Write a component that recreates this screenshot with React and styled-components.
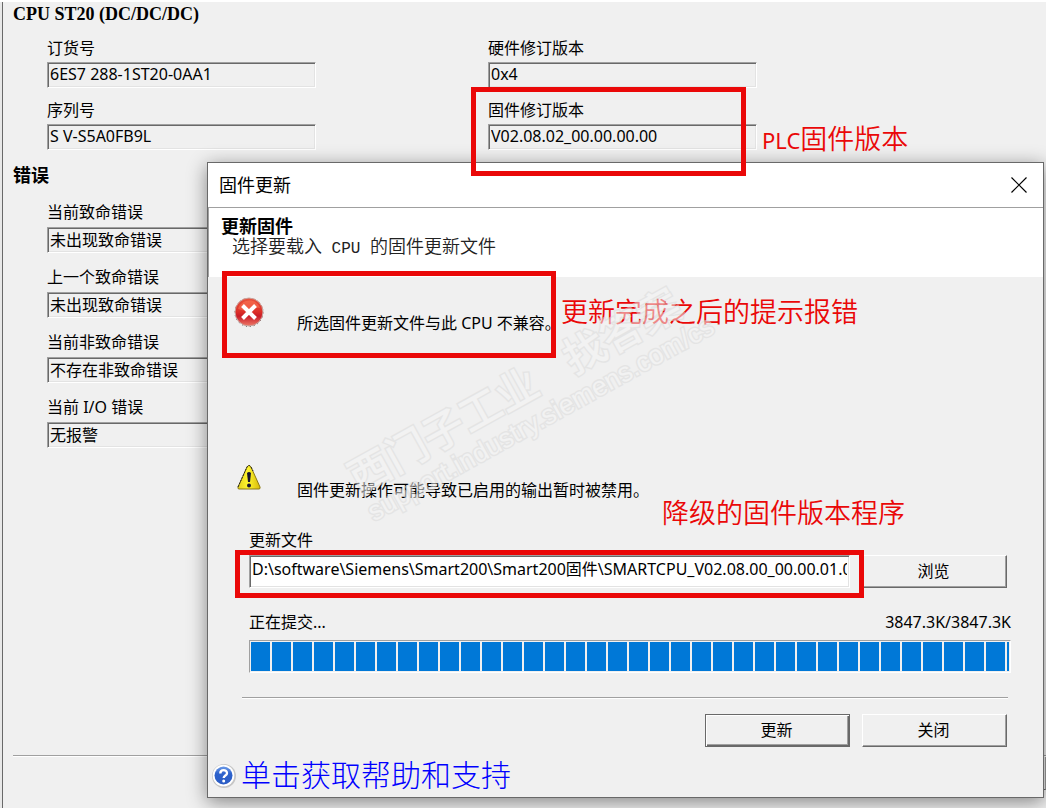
import React from "react";
import styled, { createGlobalStyle, css } from "styled-components";

const GlobalStyle = createGlobalStyle`
  * { box-sizing: border-box; }
  body {
    margin: 0;
    background: #fff;
    color: #000;
    font: 16px/20px "Noto Sans", "Noto Sans CJK SC", sans-serif;
  }
  h1, h2, h3, p { margin: 0; }
  button, input { font: inherit; color: inherit; }
`;

const serif = `"Liberation Serif", "Noto Sans CJK SC", serif`;

const sunken = css`
  border: 1px solid;
  border-color: #a0a0a0 #fff #fff #a0a0a0;
  box-shadow: inset 1px 1px 0 #696969, inset -1px -1px 0 #e3e3e3;
`;

const Screen = styled.div`
  position: relative;
  min-height: 100vh;
  padding: 2px 0 0 2px;
  background: linear-gradient(#fff 2px, #e8e8e8 2px);
  overflow: hidden;
`;

const Page = styled.main`
  display: flex;
  flex-direction: column;
  min-height: calc(100vh - 2px);
  padding-left: 10px;
  border-left: 1px solid #696969;
  background: #f0f0f0;
`;

const DeviceTitle = styled.h1`
  font: bold 18px/24px ${serif};
`;

const SectionTitle = styled.h2`
  margin-top: 14px;
  font: bold 18px/24px ${serif};
`;

const FieldGrid = styled.div`
  display: grid;
  grid-template-columns: repeat(auto-fill, 441px);
  gap: 12px 0;
  margin-top: 12px;
  padding-left: 34px;
`;

const ErrorList = styled.div`
  display: grid;
  gap: 14px;
  margin-top: 14px;
  padding-left: 34px;
`;

const FieldBox = styled.div`
  display: flex;
  flex-direction: column;
  align-items: flex-start;
  gap: ${(p) => p.$gap}px;
`;

const ReadOnlyInput = styled.input`
  ${sunken}
  width: 269px;
  height: 26px;
  padding: 0 3px 2px 2px;
  background: #f0f0f0;
  outline: none;
`;

const Rule = styled.hr`
  height: 2px;
  margin: 0;
  border: 0;
  border-top: 1px solid #a0a0a0;
  background: #fff;
`;

const PageFooter = styled.footer`
  height: 53px;
  margin-top: auto;
`;

const FooterSlot = styled.div`
  width: 200px;
  height: 33px;
  margin-left: auto;
  border-right: 1px solid #a0a0a0;
  border-bottom: 1px solid #696969;
`;

const Dialog = styled.section`
  position: absolute;
  top: 162px;
  left: 207px;
  right: 2px;
  border: 1px solid #696969;
  background: #f0f0f0;
  box-shadow: 0 4px 18px rgba(0, 0, 0, 0.45);
`;

const TitleBar = styled.header`
  display: flex;
  align-items: center;
  justify-content: space-between;
  height: 44px;
  padding: 0 16px 0 11px;
  background: #fff;
`;

const DialogTitle = styled.h2`
  font-size: 18px;
  font-weight: 400;
  line-height: 24px;
`;

const CloseButton = styled.button`
  display: flex;
  padding: 0;
  border: 0;
  background: none;
`;

const Banner = styled.div`
  height: 70px;
  padding: 9px 0 0 12px;
  border-top: 1px solid #a0a0a0;
  border-left: 1px solid #a0a0a0;
  background: #fff;
  font: 18px/20px ${serif};
`;

const BannerTitle = styled.h3`
  font-size: 18px;
  line-height: 20px;
`;

const BannerText = styled.p`
  padding-left: 11px;
  color: #222;
  font-weight: 350;
  white-space: pre;
`;

const MonoText = styled.span`
  font-family: "Liberation Mono", monospace;
  font-size: 16px;
`;

const Messages = styled.div`
  display: grid;
  gap: 131px;
  padding: 20px 0 0 26px;
`;

const Message = styled.div`
  display: grid;
  grid-template-columns: 63px 1fr;
  height: 36px;
`;

const IconBox = styled.span`
  display: flex;
  justify-content: center;
  width: 30px;
`;

const MessageText = styled.p`
  margin-top: 16px;
`;

const FileForm = styled.div`
  padding: 30px 36px 0 41px;
`;

const FileRow = styled.div`
  display: flex;
  gap: 12px;
  margin-top: 5px;
`;

const PathInput = styled.input`
  ${sunken}
  flex: 1;
  min-width: 0;
  height: 33px;
  padding: 0 2px 8px;
  background: #fff;
  outline: none;
`;

const PushButton = styled.button`
  flex: none;
  width: 145px;
  height: 33px;
  padding: 0 2px 2px 0;
  border: 1px solid;
  border-color: ${(p) => (p.$primary ? "#696969" : "#fff #696969 #696969 #fff")};
  background: #f0f0f0;
  box-shadow: ${(p) =>
    p.$primary
      ? "inset 1px 1px 0 #fff, inset -1px -1px 0 #696969, inset -2px -2px 0 #a0a0a0"
      : "inset -1px -1px 0 #a0a0a0"};
`;

const ProgressArea = styled.div`
  padding: 24px 32px 0 41px;
`;

const StatusRow = styled.div`
  display: flex;
  justify-content: space-between;
`;

const ProgressTrack = styled.div`
  height: 33px;
  margin-top: 8px;
  padding: 1px;
  border: 1px solid;
  border-color: #a0a0a0 #fff #fff #a0a0a0;
`;

const ProgressFill = styled.div`
  height: 100%;
  background: repeating-linear-gradient(90deg, #0078d7 0 19px, #f0f0f0 19px 21px);
`;

const Actions = styled.div`
  margin: 24px 35px 0 34px;
`;

const ButtonRow = styled.div`
  display: flex;
  justify-content: flex-end;
  gap: 12px;
  padding: 15px 1px 0 0;
`;

const HelpLink = styled.a`
  display: flex;
  align-items: center;
  gap: 5px;
  height: 42px;
  margin: 8px 0 0 4px;
  color: #0000ff;
  font: 300 30px/36px ${serif};
  text-decoration: none;
`;

const Frame = styled.div`
  position: absolute;
  top: ${(p) => p.$y}px;
  left: ${(p) => p.$x}px;
  width: ${(p) => p.$w}px;
  height: ${(p) => p.$h}px;
  border: 5px solid #ea0808;
  pointer-events: none;
`;

const Note = styled.p`
  position: absolute;
  top: ${(p) => p.$y}px;
  left: ${(p) => p.$x}px;
  color: #ea0808;
  font-family: "Noto Sans CJK SC", sans-serif;
  font-size: 27px;
  font-weight: 350;
  line-height: 36px;
  white-space: nowrap;
`;

const NoteLatin = styled.span`
  font-family: "Noto Sans", sans-serif;
  font-size: 22px;
  font-weight: 400;
`;

const Watermark = styled.div`
  position: absolute;
  top: 462px;
  left: 341px;
  transform: rotate(-29deg);
  transform-origin: 0 0;
  color: #f4f4f4;
  -webkit-text-stroke: 3px #dcdcdc;
  paint-order: stroke fill;
  opacity: 0.55;
  white-space: nowrap;
  pointer-events: none;
`;

const WatermarkName = styled.div`
  display: flex;
  gap: 36px;
  font-size: 42px;
  font-weight: 500;
  line-height: 42px;
`;

const WatermarkUrl = styled.div`
  font: 27px/34px "Liberation Sans", sans-serif;
`;

function Field({ id, label, value, gap }) {
  return (
    <FieldBox $gap={gap}>
      <label htmlFor={id}>{label}</label>
      <ReadOnlyInput id={id} value={value} readOnly />
    </FieldBox>
  );
}

function ErrorIcon() {
  return (
    <svg width="30" height="30" viewBox="0 0 30 30" aria-hidden="true">
      <defs>
        <linearGradient id="errorFill" x1="0" y1="0" x2="0" y2="1">
          <stop offset="0" stopColor="#e8553f" />
          <stop offset="0.5" stopColor="#dc2f28" />
          <stop offset="0.65" stopColor="#c91c28" />
          <stop offset="1" stopColor="#ee7a68" />
        </linearGradient>
      </defs>
      <circle cx="15" cy="15.5" r="14" fill="none" stroke="#333" strokeDasharray="1 3" />
      <circle cx="15" cy="15" r="14" fill="url(#errorFill)" stroke="#c9a5a0" />
      <path d="M4 12C7 2 22 0 26 11 20 9 14 16 4 12Z" fill="#ff7b58" opacity="0.5" />
      <path d="M8.500 8.500 21.500 21.500M21.500 8.500 8.500 21.500" stroke="#fff" strokeWidth="4" />
    </svg>
  );
}

function WarningIcon() {
  return (
    <svg width="24" height="26" viewBox="0 0 24 26" aria-hidden="true">
      <defs>
        <linearGradient id="warnFill" x1="0" y1="0" x2="1" y2="0">
          <stop offset="0" stopColor="#e3d21c" />
          <stop offset="0.45" stopColor="#fff62e" />
          <stop offset="1" stopColor="#d8b90a" />
        </linearGradient>
      </defs>
      <path d="M12 1.5Q13 1.5 14 3L23 23Q23.500 25 22 25H2Q.5 25 1 23L10 3Q11 1.500 12 1.500Z" fill="url(#warnFill)" stroke="#8b7a14" />
      <path d="M1 23 10 3Q12 0 14 3L16 7" fill="none" stroke="#222" strokeDasharray="2 1" />
      <path d="M10 9Q12 7 14 9L13 18H11Z" fill="#17142e" />
      <circle cx="12" cy="21.500" r="2" fill="#17142e" />
    </svg>
  );
}

function HelpIcon() {
  return (
    <svg width="24" height="24" viewBox="0 0 24 24" aria-hidden="true">
      <defs>
        <linearGradient id="helpFill" x1="0" y1="0" x2="0" y2="1">
          <stop offset="0" stopColor="#6d9be8" />
          <stop offset="0.4" stopColor="#2d62cc" />
          <stop offset="1" stopColor="#2b5cc4" />
        </linearGradient>
      </defs>
      <circle cx="12" cy="12" r="12" fill="#c6c6c6" />
      <circle cx="11.500" cy="11.500" r="10.800" fill="#fff" />
      <circle cx="11.500" cy="11.500" r="9" fill="url(#helpFill)" />
      <path d="M8.300 9.500C8.300 5 15 5.200 15 9.200 15 11.600 11.700 11.500 11.700 14" fill="none" stroke="#fff" strokeWidth="2.400" />
      <circle cx="11.700" cy="17" r="1.500" fill="#fff" />
    </svg>
  );
}

const identity = [
  { id: "order", label: "订货号", value: "6ES7 288-1ST20-0AA1" },
  { id: "hardware", label: "硬件修订版本", value: "0x4" },
  { id: "serial", label: "序列号", value: "S V-S5A0FB9L" },
  { id: "firmware", label: "固件修订版本", value: "V02.08.02_00.00.00.00" },
];

const errors = [
  { id: "fatal", label: "当前致命错误", value: "未出现致命错误" },
  { id: "lastFatal", label: "上一个致命错误", value: "未出现致命错误" },
  { id: "nonFatal", label: "当前非致命错误", value: "不存在非致命错误" },
  { id: "io", label: "当前 I/O 错误", value: "无报警" },
];

export default function App() {
  return (
    <Screen>
      <GlobalStyle />
      <Page>
        <DeviceTitle>CPU ST20 (DC/DC/DC)</DeviceTitle>
        <FieldGrid>
          {identity.map((f) => (
            <Field key={f.id} {...f} gap={4} />
          ))}
        </FieldGrid>
        <SectionTitle>错误</SectionTitle>
        <ErrorList>
          {errors.map((f) => (
            <Field key={f.id} {...f} gap={5} />
          ))}
        </ErrorList>
        <PageFooter>
          <Rule />
          <FooterSlot />
        </PageFooter>
      </Page>

      <Dialog role="dialog" aria-labelledby="dialogTitle">
        <TitleBar>
          <DialogTitle id="dialogTitle">固件更新</DialogTitle>
          <CloseButton type="button" aria-label="关闭窗口">
            <svg width="16" height="16" viewBox="0 0 16 16">
              <path d="M.5.5 15.500 15.500M15.500.5.5 15.500" stroke="#000" strokeWidth="1.200" />
            </svg>
          </CloseButton>
        </TitleBar>
        <Banner>
          <BannerTitle>更新固件</BannerTitle>
          <BannerText>
            选择要载入<MonoText> CPU </MonoText>的固件更新文件
          </BannerText>
        </Banner>
        <Messages>
          <Message>
            <IconBox>
              <ErrorIcon />
            </IconBox>
            <MessageText>所选固件更新文件与此 CPU 不兼容。</MessageText>
          </Message>
          <Message>
            <IconBox>
              <WarningIcon />
            </IconBox>
            <MessageText>固件更新操作可能导致已启用的输出暂时被禁用。</MessageText>
          </Message>
        </Messages>
        <FileForm>
          <label htmlFor="file">更新文件</label>
          <FileRow>
            <PathInput
              id="file"
              defaultValue="D:\software\Siemens\Smart200\Smart200固件\SMARTCPU_V02.08.00_00.00.01.00"
            />
            <PushButton type="button">浏览</PushButton>
          </FileRow>
        </FileForm>
        <ProgressArea>
          <StatusRow>
            <span>正在提交...</span>
            <span>3847.3K/3847.3K</span>
          </StatusRow>
          <ProgressTrack role="progressbar" aria-valuenow={100} aria-label="正在提交">
            <ProgressFill />
          </ProgressTrack>
        </ProgressArea>
        <Actions>
          <Rule />
          <ButtonRow>
            <PushButton type="button" $primary>
              更新
            </PushButton>
            <PushButton type="button">关闭</PushButton>
          </ButtonRow>
        </Actions>
        <HelpLink href="#help">
          <HelpIcon />
          单击获取帮助和支持
        </HelpLink>
      </Dialog>

      <Note $x={762} $y={120}>
        <NoteLatin>PLC</NoteLatin>固件版本
      </Note>
      <Note $x={561} $y={293}>更新完成之后的提示报错</Note>
      <Note $x={662} $y={494}>降级的固件版本程序</Note>
      <Watermark aria-hidden="true">
        <WatermarkName>
          <span>西门子工业</span>
          <span>找答案</span>
        </WatermarkName>
        <WatermarkUrl>support.industry.siemens.com/cs</WatermarkUrl>
      </Watermark>
      <Frame $x={471} $y={87} $w={275} $h={89} />
      <Frame $x={222} $y={271} $w={334} $h={87} />
      <Frame $x={235} $y={550} $w={629} $h={48} />
    </Screen>
  );
}
